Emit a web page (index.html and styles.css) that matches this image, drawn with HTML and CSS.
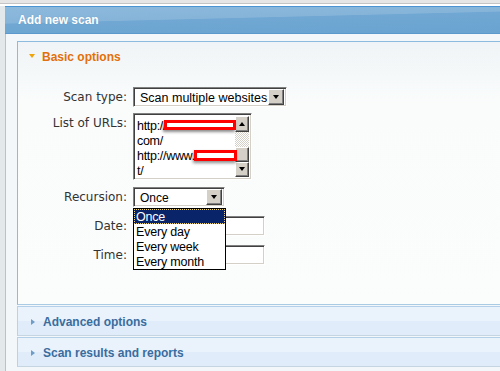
FILE: index.html
```html
<!DOCTYPE html>
<html lang="en">
<head>
  <meta charset="UTF-8" />
  <title>Add new scan</title>
  <link rel="stylesheet" href="styles.css">
</head>
<body>
  <div class="frame">
    <div class="window">
      <div class="window-title">Add new scan</div>
      <div class="window-body">

        <div class="panel">
          <div class="panel-head"><span class="arrow-down"></span>Basic options</div>
          <div class="form">
            <div class="row">
              <label>Scan type:</label>
              <div class="select select-wide">
                <span class="select-value">Scan multiple websites</span>
                <span class="drop-btn"><span class="tri-down"></span></span>
              </div>
            </div>

            <div class="row row-top">
              <label>List of URLs:</label>
              <div class="textarea">
                <div class="lines">
                  <div>http://</div>
                  <div>com/</div>
                  <div>http://www.</div>
                  <div>t/</div>
                </div>
                <div class="scrollbar">
                  <span class="sb-btn"><span class="tri-up"></span></span>
                  <span class="sb-track"></span>
                  <span class="sb-thumb"></span>
                  <span class="sb-btn"><span class="tri-down"></span></span>
                </div>
                <span class="redact redact-1"></span>
                <span class="redact redact-2"></span>
              </div>
            </div>

            <div class="row">
              <label>Recursion:</label>
              <div class="select select-short">
                <span class="select-value">Once</span>
                <span class="drop-btn"><span class="tri-down"></span></span>
                <ul class="dropdown">
                  <li class="selected">Once</li>
                  <li>Every day</li>
                  <li>Every week</li>
                  <li>Every month</li>
                </ul>
              </div>
            </div>

            <div class="row">
              <label>Date:</label>
              <div class="input"></div>
            </div>

            <div class="row">
              <label>Time:</label>
              <div class="input"></div>
            </div>
          </div>
        </div>

        <div class="bar"><span class="arrow-right"></span>Advanced options</div>
        <div class="bar"><span class="arrow-right"></span>Scan results and reports</div>

      </div>
    </div>
  </div>
</body>
</html>
```

FILE: styles.css
```css
* {
  margin: 0;
  padding: 0;
  box-sizing: border-box;
}

body {
  background: #e6e6e6;
  padding-top: 3px;
  overflow: hidden;
  font-family: 'DejaVu Sans', Verdana, sans-serif;
  font-size: 12px;
  color: #333;
}

.frame {
  border-top: 1px solid #c4c4c4;
  padding: 2px 0 0 5px;
  background: linear-gradient(to bottom, #ffffff 0, #ffffff 2px, #e3e8eb 2px);
  height: 368px;
}

.window {
  width: 520px;
  border-left: 1px solid #a8c6de;
  background: #f4f7f9;
  height: 100%;
}

/* Title bar */
.window-title {
  margin-left: -1px;
  height: 28px;
  border-top: 1px solid #4a94d4;
  border-bottom: 1px solid #5b98cc;
  background: linear-gradient(178.6deg, #8cb9dc 0, #86b4d9 42%, #70a8d3 44%, #6aa3d0 100%);
  color: #fff;
  font-family: 'Liberation Sans', Arial, sans-serif;
  font-weight: 700;
  font-size: 12px;
  line-height: 27px;
  padding-left: 13px;
  text-shadow: 0 0 1px rgba(40, 90, 140, 0.35);
}

.window-body {
  padding: 7px 0 0 11px;
}

/* Panels */
.panel {
  border: 1px solid #8dbbe0;
  border-bottom-color: #a9cbe3;
  background: linear-gradient(to bottom, #f0f4f6 0, #fafcfc 60px, #fbfdfd 100%);
}

.panel-head {
  height: 28px;
  display: flex;
  align-items: center;
  padding: 1px 0 0 11px;
  font-family: 'Liberation Sans', Arial, sans-serif;
  font-weight: 700;
  font-size: 12px;
  color: #e2700c;
}

.arrow-down {
  width: 0;
  height: 0;
  border-left: 3.5px solid transparent;
  border-right: 3.5px solid transparent;
  border-top: 4px solid #f0a30a;
  margin-right: 7px;
  margin-top: -1px;
}

.form {
  padding: 17px 0 39px 0;
}

.row {
  display: grid;
  grid-template-columns: 109px auto;
  column-gap: 6px;
  align-items: center;
  margin-bottom: 9px;
}

.row:nth-child(1) { margin-bottom: 6px; }
.row:nth-child(2) { margin-bottom: 7px; }
.row:last-child { margin-bottom: 0; }

.row label {
  text-align: right;
  line-height: 16px;
}

.row-top {
  align-items: start;
}

.row-top label {
  padding-top: 2px;
}

/* Sunken win-classic controls */
.select,
.textarea,
.input {
  position: relative;
  background: #fff;
  border: 1px solid;
  border-color: #808080 #ffffff #ffffff #808080;
  box-shadow: inset 1px 1px 0 #404040, inset -1px -1px 0 #d4d0c8;
}

.select {
  height: 20px;
  display: flex;
  align-items: center;
  padding: 2px;
  font-family: 'Liberation Sans', Arial, sans-serif;
  font-size: 12px;
  color: #000;
}

.select-wide { width: 154px; }
.select-wide .select-value { font-size: 12.5px; }
.select-short { width: 92px; }

.select-value {
  flex: 1;
  padding: 1px 0 0 4px;
  white-space: nowrap;
}

.drop-btn,
.sb-btn,
.sb-thumb {
  display: flex;
  align-items: center;
  justify-content: center;
  background: #d4d0c8;
  border: 1px solid;
  border-color: #ffffff #404040 #404040 #ffffff;
  box-shadow: inset -1px -1px 0 #808080;
}

.drop-btn {
  width: 16px;
  height: 16px;
}

.tri-down,
.tri-up {
  width: 0;
  height: 0;
  border-left: 3.5px solid transparent;
  border-right: 3.5px solid transparent;
}

.tri-down { border-top: 4px solid #000; }
.tri-up { border-bottom: 4px solid #000; }

/* URL list */
.textarea {
  width: 119px;
  height: 67px;
  display: flex;
  padding: 2px;
}

.lines {
  flex: 1;
  padding: 3px 0 0 1px;
  font-family: 'Liberation Sans', Arial, sans-serif;
  font-size: 12.5px;
  line-height: 15px;
  letter-spacing: -0.3px;
  color: #000;
  overflow: hidden;
}

.scrollbar {
  width: 14px;
  display: flex;
  flex-direction: column;
}

.sb-btn { height: 16px; }
.sb-thumb { height: 15px; }

.sb-track {
  height: 16px;
  background: repeating-conic-gradient(#d4d0c8 0 25%, #ffffff 0 50%) 0 0 / 2px 2px;
}

.redact {
  position: absolute;
  background: #fff;
  border: 3px solid #ff0000;
  box-shadow: -1px 2px 3px rgba(0, 0, 0, 0.45);
}

.redact-1 { left: 30px; top: 6px; width: 72px; height: 10px; }
.redact-2 { left: 60px; top: 36px; width: 43px; height: 11px; }

/* Open dropdown */
.dropdown {
  position: absolute;
  left: -1px;
  top: calc(100% + 2px);
  width: 93px;
  list-style: none;
  background: #fff;
  border: 1px solid #000;
  z-index: 5;
}

.dropdown li {
  height: 15px;
  line-height: 16px;
  padding-left: 2px;
  font-size: 12.5px;
  letter-spacing: -0.2px;
}

.dropdown li.selected {
  background: #0a246a;
  color: #fff;
  outline: 1px dotted #f2d77a;
  outline-offset: -1px;
}

.input {
  width: 132px;
  height: 20px;
}

/* Collapsed sections */
.bar {
  margin-top: 1px;
  height: 30px;
  display: flex;
  align-items: center;
  padding: 2px 0 0 13px;
  border-top: 1px solid #b3d0e8;
  border-bottom: 1px solid #c5d6e2;
  border-left: 1px solid #b8d2e8;
  background: linear-gradient(to bottom, #eaf3fc 0, #eaf3fc 50%, #e0ecf9 50%, #e0ecf9 100%);
  font-family: 'Liberation Sans', Arial, sans-serif;
  font-weight: 700;
  font-size: 12px;
  color: #3a6c9e;
}

.arrow-right {
  width: 0;
  height: 0;
  border-top: 3.5px solid transparent;
  border-bottom: 3.5px solid transparent;
  border-left: 4px solid #6f9cc6;
  margin-right: 8px;
  margin-top: -1px;
}
```
